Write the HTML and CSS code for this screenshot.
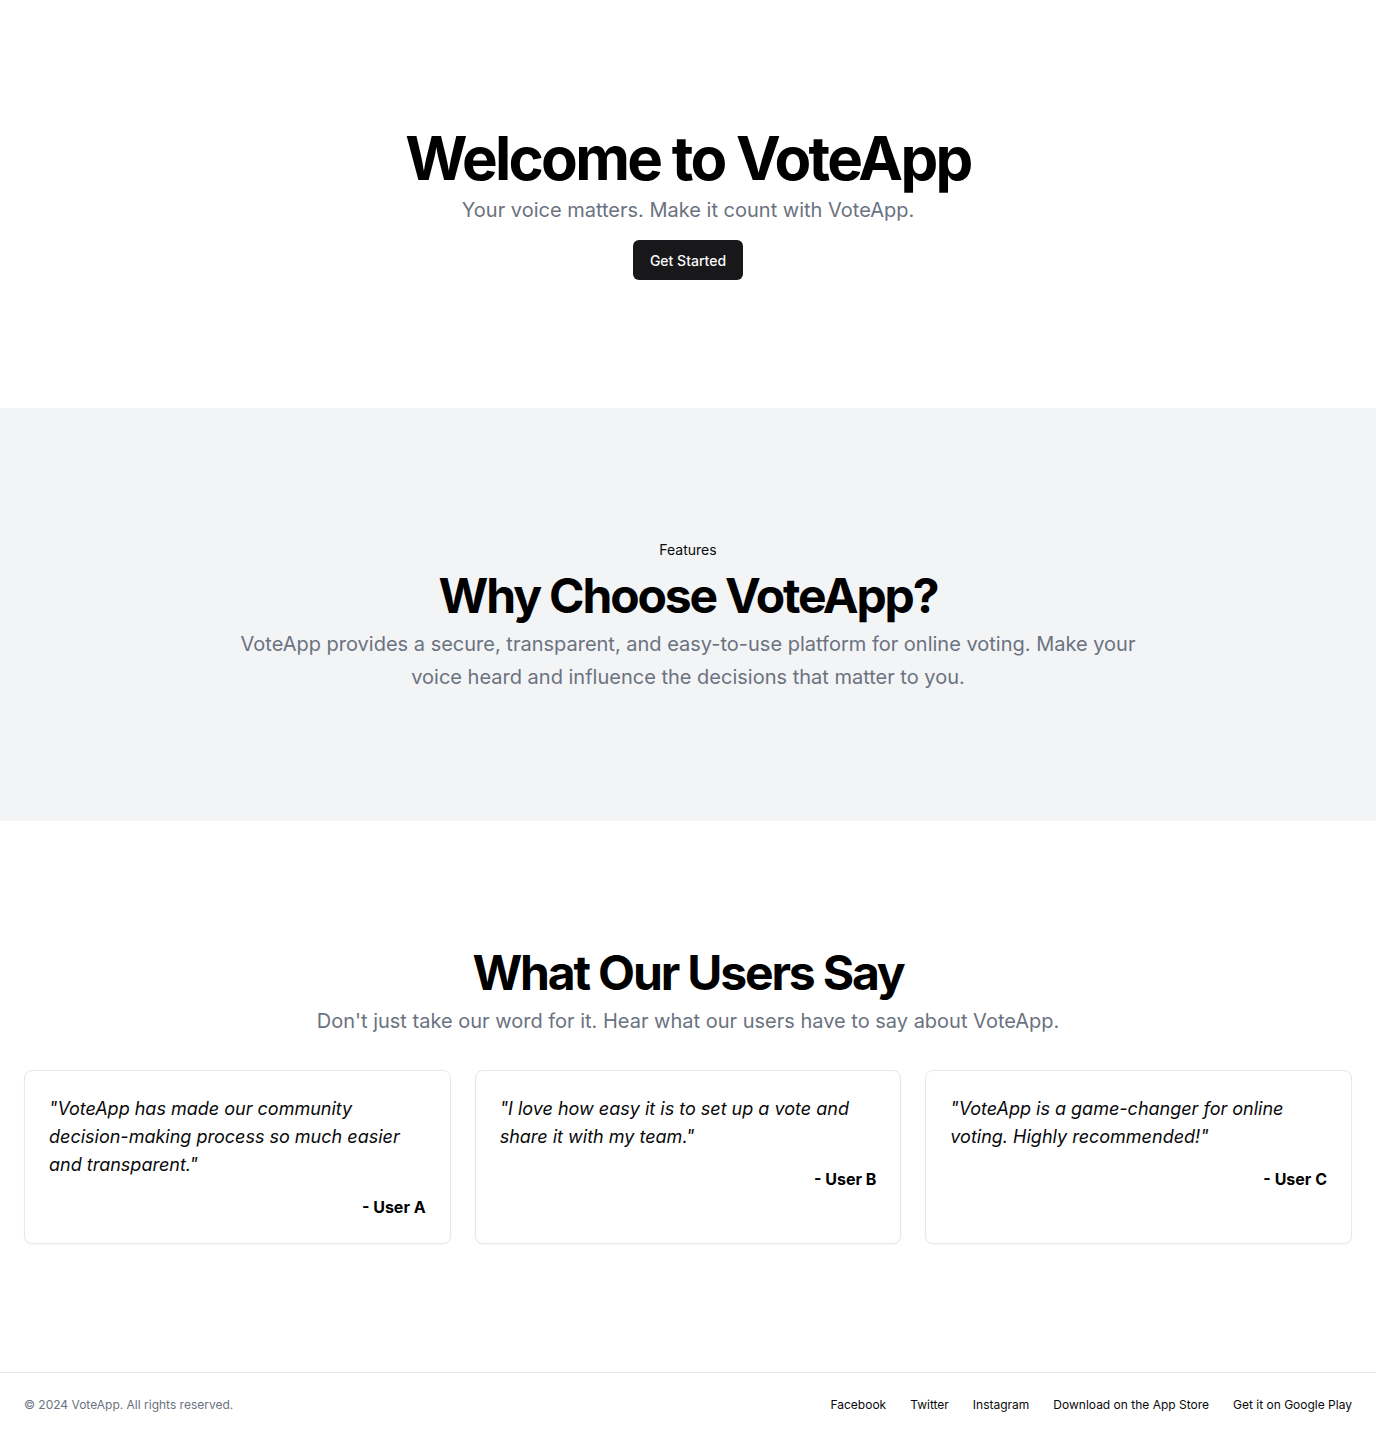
FILE: index.html
```html
<!DOCTYPE html>
<html lang="en">
<head>
<meta charset="utf-8">
<title>VoteApp</title>
<link rel="stylesheet" href="styles.css">
</head>
<body>
<main class="page">
  <section class="hero">
    <div class="container stack-center">
      <div class="text-block">
        <h1 class="h1">Welcome to VoteApp</h1>
        <p class="lead">Your voice matters. Make it count with VoteApp.</p>
      </div>
      <a class="btn" href="#">Get Started</a>
    </div>
  </section>

  <section class="features">
    <div class="container stack-center">
      <div class="text-block">
        <div class="badge">Features</div>
        <h2 class="h2">Why Choose VoteApp?</h2>
        <p class="lead relaxed">VoteApp provides a secure, transparent, and easy-to-use platform for online voting. Make your voice heard and influence the decisions that matter to you.</p>
      </div>
    </div>
  </section>

  <section class="testimonials">
    <div class="container">
      <div class="text-block">
        <h2 class="h2">What Our Users Say</h2>
        <p class="lead relaxed">Don't just take our word for it. Hear what our users have to say about VoteApp.</p>
      </div>
      <div class="grid">
        <div class="card">
          <p class="quote">"VoteApp has made our community decision-making process so much easier and transparent."</p>
          <p class="author">- User A</p>
        </div>
        <div class="card">
          <p class="quote">"I love how easy it is to set up a vote and share it with my team."</p>
          <p class="author">- User B</p>
        </div>
        <div class="card">
          <p class="quote">"VoteApp is a game-changer for online voting. Highly recommended!"</p>
          <p class="author">- User C</p>
        </div>
      </div>
    </div>
  </section>
</main>
<footer class="footer">
  <p class="copy">© 2024 VoteApp. All rights reserved.</p>
  <nav class="links">
    <a href="#">Facebook</a>
    <a href="#">Twitter</a>
    <a href="#">Instagram</a>
    <a href="#">Download on the App Store</a>
    <a href="#">Get it on Google Play</a>
  </nav>
</footer>
</body>
</html>
```

FILE: styles.css
```css
* { box-sizing: border-box; margin: 0; padding: 0; }
html, body { background: #fff; }
body {
  font-family: Inter, "Liberation Sans", sans-serif;
  color: #09090b;
  -webkit-font-smoothing: antialiased;
}
a { color: inherit; text-decoration: none; }

.container { width: 100%; padding: 0 24px; }
.stack-center { display: flex; flex-direction: column; align-items: center; gap: 16px; text-align: center; }
.text-block { display: flex; flex-direction: column; align-items: center; gap: 8px; text-align: center; }

.hero { padding: 128px 0; }
.h1 {
  font-size: 60px; line-height: 1; font-weight: 700; letter-spacing: -0.045em; color: #000;
}
.h2 {
  font-size: 48px; line-height: 1; font-weight: 700; letter-spacing: -0.045em; color: #000;
}
.lead {
  max-width: 700px; font-size: 20px; line-height: 28px; color: #6b7280;
}
.lead.relaxed { max-width: 900px; line-height: 1.625; }

.btn {
  display: inline-flex; align-items: center; justify-content: center;
  height: 40px; padding: 0 16px; border-radius: 6px;
  background: #18181b; color: #fafafa; font-size: 14px; font-weight: 500;
  min-width: 110px;
}

.features { background: #f3f4f6; padding: 128px 0; }
.badge {
  display: inline-block; padding: 4px 12px; border-radius: 8px; background: #f3f4f6;
  font-size: 14px; line-height: 20px; color: #09090b;
}

.testimonials { padding: 128px 0; }
.grid {
  margin-top: 32px;
  display: grid; grid-template-columns: repeat(3, 1fr); gap: 24px;
}
.card {
  border: 1px solid #e5e7eb; border-radius: 8px; background: #fff;
  padding: 24px; box-shadow: 0 1px 2px rgba(0,0,0,0.04);
}
.quote { font-size: 18px; line-height: 28px; font-style: italic; color: #09090b; }
.author { margin-top: 16px; text-align: right; font-size: 16px; line-height: 24px; font-weight: 700; color: #000; }

.footer {
  display: flex; align-items: center; padding: 24px; border-top: 1px solid #e5e7eb;
}
.copy { font-size: 12px; line-height: 16px; color: #6b7280; }
.links { margin-left: auto; display: flex; gap: 24px; font-size: 12px; line-height: 16px; color: #09090b; }
```
